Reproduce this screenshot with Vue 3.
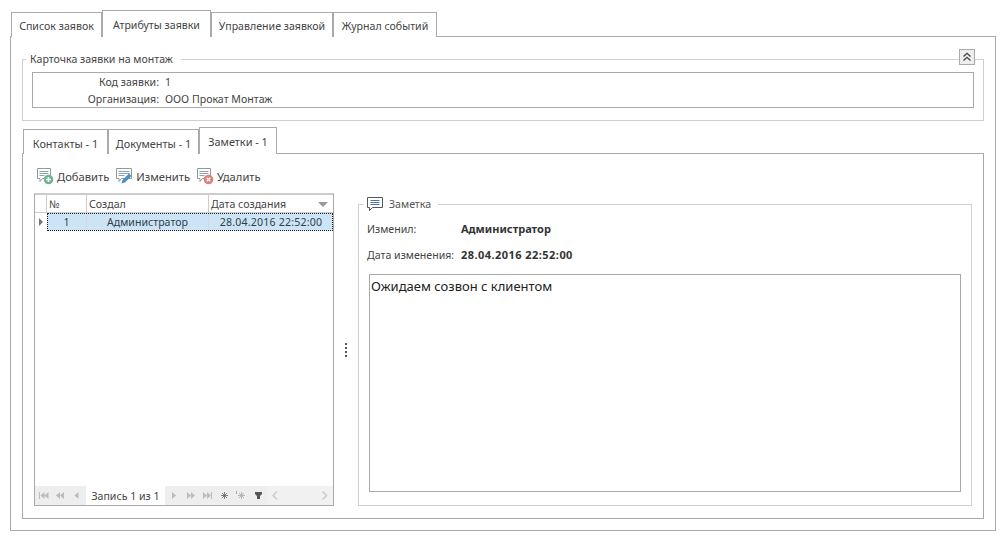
<template>
  <div class="page">
    <div class="tabs">
      <div v-for="t in mainTabs" :key="t.name" class="tab" :class="{ active: t.name === 'Атрибуты заявки' }" :style="{ width: t.width + 'px' }">{{ t.name }}</div>
    </div>
    <div class="main-panel">
      <fieldset class="card">
        <legend>Карточка заявки на монтаж</legend>
        <button class="collapse">
          <svg width="10" height="10" viewBox="0 0 10 10"><path d="M1.500 4.500 5 1.300 8.500 4.500M1.500 8.500 5 5.300 8.500 8.500" fill="none" stroke="#444" stroke-width="1.300"/></svg>
        </button>
        <div class="card-body">
          <div class="card-row"><span class="card-label">Код заявки:</span><span>1</span></div>
          <div class="card-row"><span class="card-label">Организация:</span><span>ООО Прокат Монтаж</span></div>
        </div>
      </fieldset>

      <div class="tabs inner-tabs">
        <div v-for="t in subTabs" :key="t.name" class="tab" :class="{ active: t.name === 'Заметки - 1' }" :style="{ width: t.width + 'px' }">{{ t.name }}</div>
      </div>
      <div class="sub-panel">
        <div class="toolbar">
          <div class="tool">
            <svg width="18" height="18" viewBox="0 0 18 18">
              <path d="M1.500 1.500h13v10h-8l-2.500 3v-3H1.500z" fill="#fff" stroke="#8a9ba5"/>
              <path d="M3.500 4.500h9M3.500 6.500h9M3.500 8.500h5" stroke="#8fa3ad"/>
              <circle cx="12.500" cy="12.500" r="4.800" fill="#6cb58f"/>
              <path d="M12.500 10v5M10 12.500h5" stroke="#fff" stroke-width="1.600"/>
            </svg>
            <span>Добавить</span>
          </div>
          <div class="tool">
            <svg width="18" height="18" viewBox="0 0 18 18">
              <path d="M1.500 1.500h15v10h-10l-2.500 3v-3H1.500z" fill="#fff" stroke="#8a9ba5"/>
              <path d="M3.500 4.500h11M3.500 6.500h11M3.500 8.500h6" stroke="#8fa3ad"/>
              <path d="M6.500 16.500l1-3.500 6.500-6.500 2.500 2.500-6.500 6.500z" fill="#4a90c8"/>
            </svg>
            <span>Изменить</span>
          </div>
          <div class="tool">
            <svg width="18" height="18" viewBox="0 0 18 18">
              <path d="M1.500 1.500h13v10h-8l-2.500 3v-3H1.500z" fill="#fff" stroke="#8a9ba5"/>
              <path d="M3.500 4.500h9M3.500 6.500h9M3.500 8.500h5" stroke="#8fa3ad"/>
              <circle cx="12.500" cy="12.500" r="4.800" fill="#df7f78"/>
              <path d="M10.700 10.700l3.600 3.600M14.300 10.700l-3.600 3.600" stroke="#fff" stroke-width="1.500"/>
            </svg>
            <span>Удалить</span>
          </div>
        </div>

        <div class="content">
          <div class="grid">
            <div class="grid-head">
              <div class="indicator"></div>
              <div class="col-num">№</div>
              <div class="col-author">Создал</div>
              <div class="col-date">Дата создания<i class="sort"></i></div>
            </div>
            <div class="grid-row">
              <div class="indicator"><i class="arrow"></i></div>
              <div class="cells">
                <div class="col-num center">1</div>
                <div class="col-author center">Администратор</div>
                <div class="col-date center date">28.04.2016 22:52:00</div>
              </div>
            </div>
            <div class="grid-empty"></div>
            <div class="grid-nav">
              <div class="nav-buttons">
                <svg width="51" height="19" viewBox="0 0 51 19" fill="#bbb">
                  <path d="M4 6h1v7H4zM9.500 6v7L5.500 9.500zM13.500 6v7L9.500 9.500z"/>
                  <path d="M25 6v7l-4-3.500zM29 6v7l-4-3.500z"/>
                  <path d="M43.500 6v7l-4-3.500z"/>
                </svg>
              </div>
              <div class="nav-text">Запись 1 из 1</div>
              <div class="nav-buttons nav-right">
                <svg width="102" height="19" viewBox="0 0 102 19">
                  <g fill="#bbb">
                    <path d="M7 6v7l4-3.500zM22 6v7l4-3.500zM26 6v7l4-3.500z"/>
                    <path d="M38 6v7l4-3.500zM42 6v7l4-3.500zM46 6h1v7h-1z"/>
                  </g>
                  <path d="M59.500 6v7M56 9.500h7M57 7l5 5M62 7l-5 5" stroke="#666" stroke-width=".8" fill="none"/>
                  <path d="M76.500 6v7M73 9.500h7M74 7l5 5M79 7l-5 5" stroke="#aaa" stroke-width=".8" fill="none"/>
                  <path d="M71.500 5v3" stroke="#c9a36b"/>
                  <path d="M90 6h7v2l-2 2v3h-3v-3l-2-2z" fill="#555"/>
                </svg>
              </div>
              <div class="nav-scroll">
                <svg width="66" height="19" viewBox="0 0 66 19" fill="none" stroke="#ccc" stroke-width="1.500">
                  <path d="M10 5.500 6 9.500l4 4M55.500 5.500l4 4-4 4"/>
                </svg>
              </div>
            </div>
          </div>

          <div class="splitter">
            <i></i><i></i><i></i><i></i>
          </div>

          <fieldset class="note">
            <legend>
              <svg width="17" height="16" viewBox="0 0 17 16">
                <path d="M.5 1.500h15v10h-10l-3 3v-3h-2z" fill="#fff" stroke="#4d5963"/>
                <path d="M3.500 4.500h9M3.500 6.500h9M3.500 8.500h9" stroke="#4a78a8"/>
              </svg>
              <span>Заметка</span>
            </legend>
            <div class="note-row"><span class="note-label">Изменил:</span><b>Администратор</b></div>
            <div class="note-row"><span class="note-label">Дата изменения:</span><b class="date">28.04.2016 22:52:00</b></div>
            <div class="note-text">Ожидаем созвон с клиентом</div>
          </fieldset>
        </div>
      </div>
    </div>
  </div>
</template>

<script setup>
const mainTabs = [
  { name: 'Список заявок', width: 91 },
  { name: 'Атрибуты заявки', width: 109 },
  { name: 'Управление заявкой', width: 122 },
  { name: 'Журнал событий', width: 104 }
]
const subTabs = [
  { name: 'Контакты - 1', width: 85 },
  { name: 'Документы - 1', width: 91 },
  { name: 'Заметки - 1', width: 78 }
]
</script>

<style>
html, body {
  margin: 0;
  background: #fff;
}
</style>

<style scoped>
.page {
  width: 1006px;
  height: 541px;
  box-sizing: border-box;
  padding: 10px 10px 0;
  font-family: "Noto Sans", "DejaVu Sans", sans-serif;
  font-size: 10.6px;
  color: #444;
  overflow: hidden;
}

.tabs {
  display: flex;
  align-items: flex-end;
  height: 27px;
  padding-left: 1px;
  margin-bottom: -1px;
  position: relative;
}

.tab {
  height: 25px;
  line-height: 27px;
  box-sizing: border-box;
  border: 1px solid #aaa;
  border-bottom: none;
  background: #fff;
  text-align: center;
  white-space: nowrap;
}

.tab.active {
  height: 27px;
  line-height: 28px;
  z-index: 1;
}

.inner-tabs .tab {
  font-size: 10.9px;
}

.main-panel {
  width: 986px;
  height: 495px;
  box-sizing: border-box;
  border: 1px solid #aaa;
  padding: 15px 11px 0;
}

.card {
  position: relative;
  margin: 0;
  padding: 5px 9px 12px;
  height: 69px;
  box-sizing: border-box;
  border: 1px solid #d0d0d0;
  min-width: 0;
}

.card legend {
  padding: 0 8px 0 4px;
  margin-left: -6px;
  line-height: 15px;
}

.collapse {
  position: absolute;
  top: -18px;
  right: 8px;
  width: 16px;
  height: 16px;
  padding: 0;
  border: 1px solid #aaa;
  background: #eee;
  display: flex;
  align-items: center;
  justify-content: center;
}

.card-body {
  height: 36px;
  box-sizing: border-box;
  border: 1px solid #aaa;
  padding-top: 1px;
}

.card-row {
  display: flex;
  gap: 6px;
  height: 17px;
  line-height: 17px;
}

.card-label {
  width: 126px;
  text-align: right;
}

.inner-tabs {
  margin-top: 6px;
}

.sub-panel {
  height: 366px;
  box-sizing: border-box;
  border: 1px solid #aaa;
  padding: 11px;
}

.toolbar {
  display: flex;
  height: 22px;
  gap: 6px;
  margin-bottom: 6px;
  padding-left: 2px;
  font-size: 11.2px;
}

.tool {
  display: flex;
  align-items: center;
  gap: 3px;
}

.content {
  display: flex;
  height: 313px;
}

.grid {
  width: 300px;
  box-sizing: border-box;
  border: 1px solid #aaa;
  border-top-width: 2px;
  border-top-color: #ccc;
  display: flex;
  flex-direction: column;
}

.grid-head {
  display: flex;
  height: 18px;
  line-height: 18px;
  border-bottom: 1px solid #ccc;
  box-sizing: border-box;
  flex: none;
}

.grid-head > div {
  border-right: 1px solid #ccc;
  padding-left: 2px;
  box-sizing: border-box;
}

.grid-head .indicator {
  padding: 0;
}

.grid-head .col-date {
  border-right: none;
  position: relative;
}

.indicator {
  width: 12px;
  flex: none;
  position: relative;
}

.col-num {
  width: 40px;
}

.col-author {
  width: 122px;
}

.col-date {
  width: 124px;
}

.sort {
  position: absolute;
  right: 5px;
  top: 7px;
  border-left: 5px solid transparent;
  border-right: 5px solid transparent;
  border-top: 5px solid #999;
}

.grid-row {
  display: flex;
  height: 18px;
  flex: none;
}

.arrow {
  position: absolute;
  left: 4px;
  top: 5px;
  border-top: 4px solid transparent;
  border-bottom: 4px solid transparent;
  border-left: 4px solid #777;
}

.cells {
  display: flex;
  flex: 1;
  box-sizing: border-box;
  outline: 1px dotted #222;
  outline-offset: -1px;
  background: #cde4f6;
  line-height: 18px;
  color: #2f3f4a;
}

.cells > div {
  border-right: 1px solid #d8d8d8;
  box-sizing: border-box;
}

.cells > div:last-child {
  border-right: none;
}

.center {
  text-align: center;
}

.date {
  letter-spacing: 0.2px;
}

.grid-empty {
  flex: 1;
}

.grid-nav {
  display: flex;
  height: 19px;
  line-height: 20px;
  flex: none;
}

.nav-buttons {
  background: #eee;
  height: 19px;
  width: 51px;
  flex: none;
}

.nav-right {
  width: 102px;
}

.nav-text {
  width: 79px;
  text-align: center;
  flex: none;
  white-space: nowrap;
}

.nav-scroll {
  flex: 1;
  background: #f1f1f1;
  height: 19px;
}

svg {
  display: block;
}

.splitter {
  width: 24px;
  flex: none;
  display: flex;
  flex-direction: column;
  align-items: center;
  justify-content: center;
  gap: 2px;
}

.splitter i {
  width: 2px;
  height: 2px;
  background: #555;
}

.note {
  flex: 1;
  min-width: 0;
  margin: 3px 0 0;
  padding: 8px 10px 13px 10px;
  box-sizing: border-box;
  border: 1px solid #d0d0d0;
  height: 310px;
  display: flex;
  flex-direction: column;
}

.note legend {
  display: flex;
  align-items: center;
  gap: 5px;
  padding: 0 7px 0 4px;
  margin-left: -6px;
  height: 16px;
  color: #555;
}

.note-row {
  display: flex;
  height: 26px;
  line-height: 18px;
  flex: none;
  margin-left: -2px;
}

.note-label {
  width: 94px;
  flex: none;
  white-space: nowrap;
}

.note-row b {
  font-size: 11px;
  font-weight: 700;
  color: #333;
}

.note-row b.date {
  letter-spacing: 0.45px;
}

.note-text {
  flex: 1;
  border: 1px solid #aaa;
  padding: 2px 1px;
  font-size: 13px;
  line-height: 18px;
  color: #222;
  margin-top: 2px;
}
</style>
